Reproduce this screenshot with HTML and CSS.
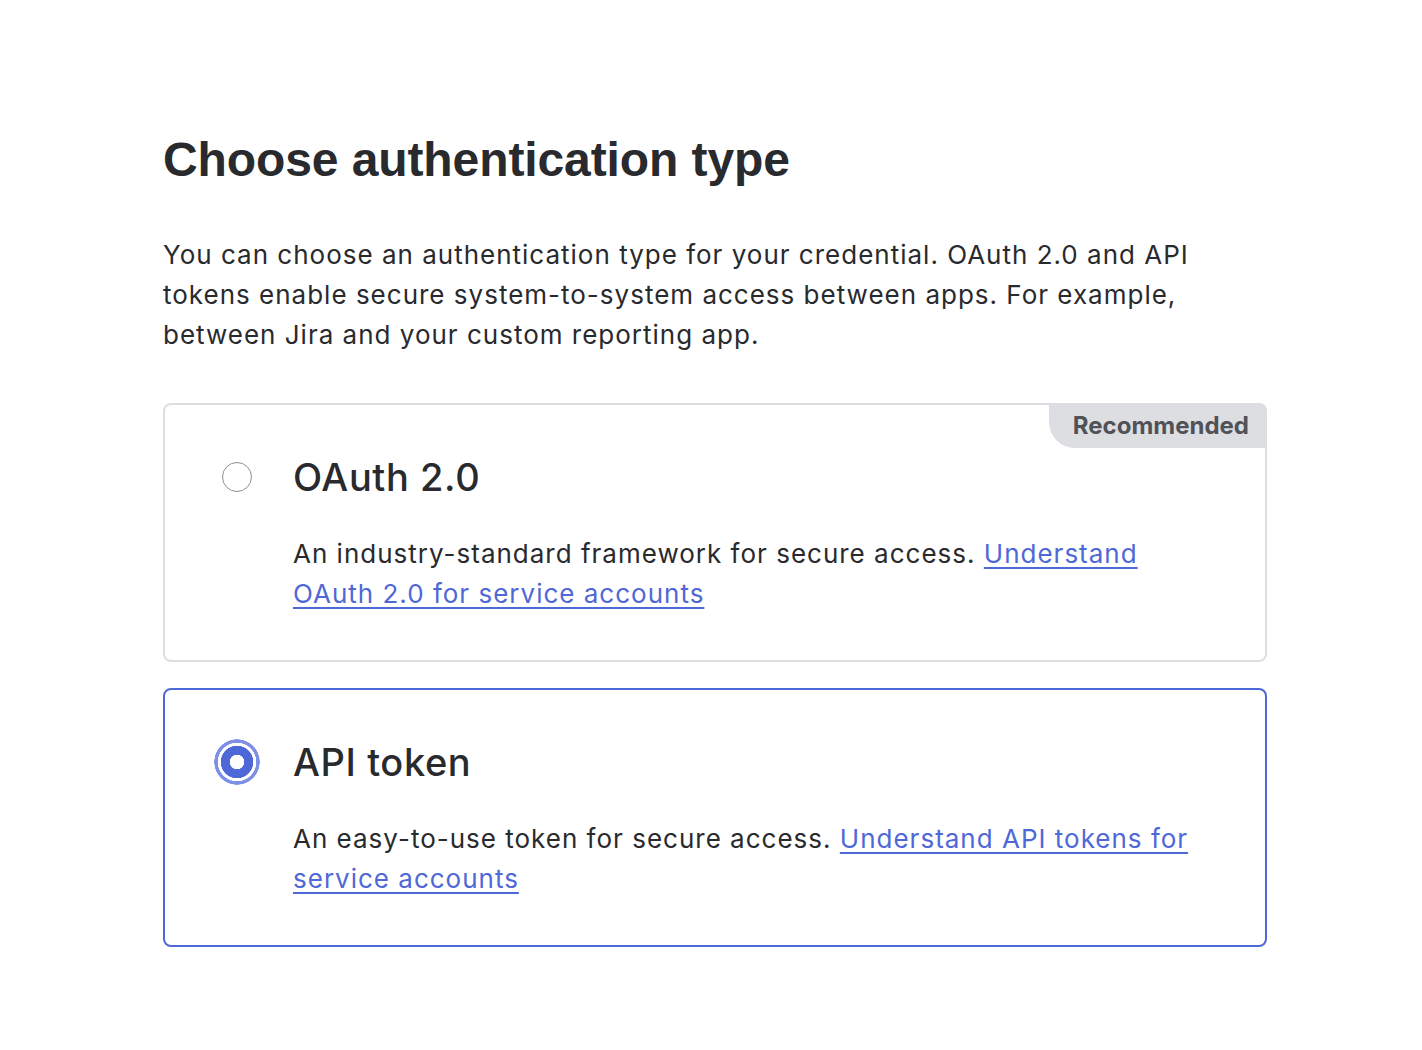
FILE: index.html
```html
<!DOCTYPE html>
<html>
<head>
<meta charset="utf-8">
<link rel="stylesheet" href="styles.css">
</head>
<body>
<main class="page">
  <h1 class="title">Choose authentication type</h1>
  <p class="intro">You can choose an authentication type for your credential. OAuth 2.0 and API tokens enable secure system-to-system access between apps. For example, between Jira and your custom reporting app.</p>
  <div class="options">
    <div class="card">
      <span class="badge">Recommended</span>
      <div class="card-head">
        <span class="radio"></span>
        <h2 class="card-title">OAuth 2.0</h2>
      </div>
      <p class="card-desc">An industry-standard framework for secure access. <a href="#">Understand OAuth 2.0 for service accounts</a></p>
    </div>
    <div class="card selected">
      <div class="card-head">
        <span class="radio checked"></span>
        <h2 class="card-title">API token</h2>
      </div>
      <p class="card-desc">An easy-to-use token for secure access. <a href="#">Understand API tokens for service accounts</a></p>
    </div>
  </div>
</main>
</body>
</html>
```

FILE: styles.css
```css
html, body {
  margin: 0;
  padding: 0;
  background: #ffffff;
}
body {
  font-family: Inter, "Noto Sans", sans-serif;
  color: #292a2e;
}
.page {
  width: 1104px;
  padding: 131px 0 0 163px;
}
.title {
  margin: 0;
  font-family: "Liberation Sans", Arial, sans-serif;
  font-weight: 700;
  font-size: 48px;
  line-height: 57.6px;
  color: #292a2e;
  letter-spacing: -0.1px;
}
.intro {
  margin: 46px 0 0;
  font-size: 26px;
  line-height: 40px;
  letter-spacing: 1px;
  color: #292a2e;
}
.options {
  margin-top: 48px;
  display: flex;
  flex-direction: column;
  gap: 26px;
}
.card {
  position: relative;
  border: 2px solid #dddee1;
  border-radius: 8px;
  padding: 48px 55px 47px 57px;
  height: 259px;
  box-sizing: border-box;
}
.card.selected {
  border-color: #4f68d7;
}
.badge {
  position: absolute;
  top: -2px;
  right: -2px;
  background: #dddee1;
  color: #505258;
  font-weight: 700;
  font-size: 24px;
  line-height: 45px;
  padding: 0 18px 0 24px;
  border-radius: 0 8px 0 26px;
}
.card-head {
  display: flex;
  align-items: center;
  gap: 41px;
  height: 48px;
}
.radio {
  width: 30px;
  height: 30px;
  box-sizing: border-box;
  border: 1.5px solid #8c8f97;
  border-radius: 50%;
  flex: none;
}
.radio.checked {
  width: 46px;
  height: 46px;
  margin: 0 -8px;
  border: none;
  background: radial-gradient(circle, #ffffff 0 7px, #4f68d7 7.5px 16px, #ffffff 16.5px 19px, #7d8fe6 19.5px 22.5px, transparent 23px);
}
.card-title {
  margin: 0;
  font-weight: 500;
  font-size: 38px;
  line-height: 48px;
  letter-spacing: 0.6px;
  color: #292a2e;
}
.card-desc {
  margin: 33px 0 0 71px;
  font-size: 26px;
  line-height: 40px;
  letter-spacing: 1px;
  color: #292a2e;
}
.card-desc a {
  color: #4f68d7;
  text-decoration: underline;
  text-underline-offset: 4px;
  text-decoration-thickness: 2px;
}
```
